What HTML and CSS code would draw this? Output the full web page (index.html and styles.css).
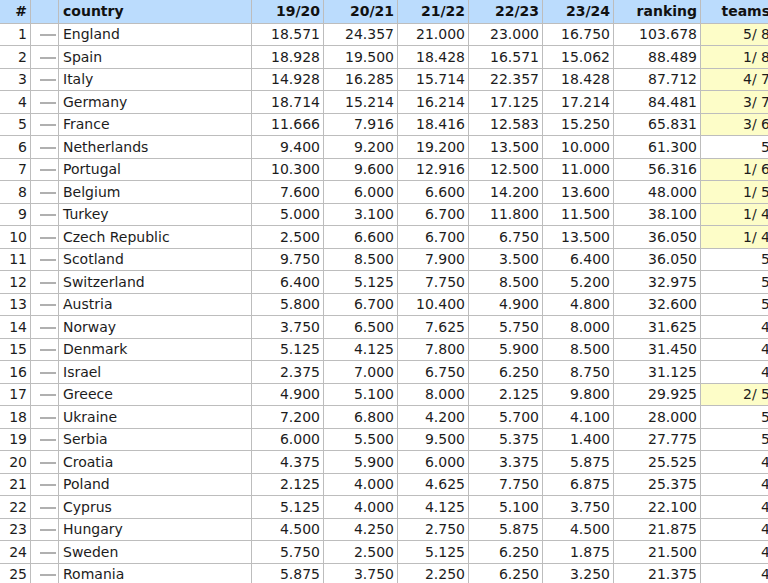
FILE: index.html
```html
<!DOCTYPE html>
<html>
<head>
<meta charset="utf-8">
<link rel="stylesheet" href="styles.css">
</head>
<body>
<table class="rank">
<colgroup>
<col class="c-pos"><col class="c-mv"><col class="c-country"><col class="c-a"><col class="c-b"><col class="c-c"><col class="c-d"><col class="c-e"><col class="c-rank"><col class="c-teams">
</colgroup>
<thead>
<tr><th class="num">#</th><th></th><th class="txt">country</th><th class="num">19/20</th><th class="num">20/21</th><th class="num">21/22</th><th class="num">22/23</th><th class="num">23/24</th><th class="num">ranking</th><th class="num">teams</th></tr>
</thead>
<tbody>
<tr><td class="num">1</td><td class="mv"><span class="dash"></span></td><td>England</td><td class="num">18.571</td><td class="num">24.357</td><td class="num">21.000</td><td class="num">23.000</td><td class="num">16.750</td><td class="num">103.678</td><td class="num hl">5/ 8</td></tr>
<tr><td class="num">2</td><td class="mv"><span class="dash"></span></td><td>Spain</td><td class="num">18.928</td><td class="num">19.500</td><td class="num">18.428</td><td class="num">16.571</td><td class="num">15.062</td><td class="num">88.489</td><td class="num hl">1/ 8</td></tr>
<tr><td class="num">3</td><td class="mv"><span class="dash"></span></td><td>Italy</td><td class="num">14.928</td><td class="num">16.285</td><td class="num">15.714</td><td class="num">22.357</td><td class="num">18.428</td><td class="num">87.712</td><td class="num hl">4/ 7</td></tr>
<tr><td class="num">4</td><td class="mv"><span class="dash"></span></td><td>Germany</td><td class="num">18.714</td><td class="num">15.214</td><td class="num">16.214</td><td class="num">17.125</td><td class="num">17.214</td><td class="num">84.481</td><td class="num hl">3/ 7</td></tr>
<tr><td class="num">5</td><td class="mv"><span class="dash"></span></td><td>France</td><td class="num">11.666</td><td class="num">7.916</td><td class="num">18.416</td><td class="num">12.583</td><td class="num">15.250</td><td class="num">65.831</td><td class="num hl">3/ 6</td></tr>
<tr><td class="num">6</td><td class="mv"><span class="dash"></span></td><td>Netherlands</td><td class="num">9.400</td><td class="num">9.200</td><td class="num">19.200</td><td class="num">13.500</td><td class="num">10.000</td><td class="num">61.300</td><td class="num">5</td></tr>
<tr><td class="num">7</td><td class="mv"><span class="dash"></span></td><td>Portugal</td><td class="num">10.300</td><td class="num">9.600</td><td class="num">12.916</td><td class="num">12.500</td><td class="num">11.000</td><td class="num">56.316</td><td class="num hl">1/ 6</td></tr>
<tr><td class="num">8</td><td class="mv"><span class="dash"></span></td><td>Belgium</td><td class="num">7.600</td><td class="num">6.000</td><td class="num">6.600</td><td class="num">14.200</td><td class="num">13.600</td><td class="num">48.000</td><td class="num hl">1/ 5</td></tr>
<tr><td class="num">9</td><td class="mv"><span class="dash"></span></td><td>Turkey</td><td class="num">5.000</td><td class="num">3.100</td><td class="num">6.700</td><td class="num">11.800</td><td class="num">11.500</td><td class="num">38.100</td><td class="num hl">1/ 4</td></tr>
<tr><td class="num">10</td><td class="mv"><span class="dash"></span></td><td>Czech Republic</td><td class="num">2.500</td><td class="num">6.600</td><td class="num">6.700</td><td class="num">6.750</td><td class="num">13.500</td><td class="num">36.050</td><td class="num hl">1/ 4</td></tr>
<tr><td class="num">11</td><td class="mv"><span class="dash"></span></td><td>Scotland</td><td class="num">9.750</td><td class="num">8.500</td><td class="num">7.900</td><td class="num">3.500</td><td class="num">6.400</td><td class="num">36.050</td><td class="num">5</td></tr>
<tr><td class="num">12</td><td class="mv"><span class="dash"></span></td><td>Switzerland</td><td class="num">6.400</td><td class="num">5.125</td><td class="num">7.750</td><td class="num">8.500</td><td class="num">5.200</td><td class="num">32.975</td><td class="num">5</td></tr>
<tr><td class="num">13</td><td class="mv"><span class="dash"></span></td><td>Austria</td><td class="num">5.800</td><td class="num">6.700</td><td class="num">10.400</td><td class="num">4.900</td><td class="num">4.800</td><td class="num">32.600</td><td class="num">5</td></tr>
<tr><td class="num">14</td><td class="mv"><span class="dash"></span></td><td>Norway</td><td class="num">3.750</td><td class="num">6.500</td><td class="num">7.625</td><td class="num">5.750</td><td class="num">8.000</td><td class="num">31.625</td><td class="num">4</td></tr>
<tr><td class="num">15</td><td class="mv"><span class="dash"></span></td><td>Denmark</td><td class="num">5.125</td><td class="num">4.125</td><td class="num">7.800</td><td class="num">5.900</td><td class="num">8.500</td><td class="num">31.450</td><td class="num">4</td></tr>
<tr><td class="num">16</td><td class="mv"><span class="dash"></span></td><td>Israel</td><td class="num">2.375</td><td class="num">7.000</td><td class="num">6.750</td><td class="num">6.250</td><td class="num">8.750</td><td class="num">31.125</td><td class="num">4</td></tr>
<tr><td class="num">17</td><td class="mv"><span class="dash"></span></td><td>Greece</td><td class="num">4.900</td><td class="num">5.100</td><td class="num">8.000</td><td class="num">2.125</td><td class="num">9.800</td><td class="num">29.925</td><td class="num hl">2/ 5</td></tr>
<tr><td class="num">18</td><td class="mv"><span class="dash"></span></td><td>Ukraine</td><td class="num">7.200</td><td class="num">6.800</td><td class="num">4.200</td><td class="num">5.700</td><td class="num">4.100</td><td class="num">28.000</td><td class="num">5</td></tr>
<tr><td class="num">19</td><td class="mv"><span class="dash"></span></td><td>Serbia</td><td class="num">6.000</td><td class="num">5.500</td><td class="num">9.500</td><td class="num">5.375</td><td class="num">1.400</td><td class="num">27.775</td><td class="num">5</td></tr>
<tr><td class="num">20</td><td class="mv"><span class="dash"></span></td><td>Croatia</td><td class="num">4.375</td><td class="num">5.900</td><td class="num">6.000</td><td class="num">3.375</td><td class="num">5.875</td><td class="num">25.525</td><td class="num">4</td></tr>
<tr><td class="num">21</td><td class="mv"><span class="dash"></span></td><td>Poland</td><td class="num">2.125</td><td class="num">4.000</td><td class="num">4.625</td><td class="num">7.750</td><td class="num">6.875</td><td class="num">25.375</td><td class="num">4</td></tr>
<tr><td class="num">22</td><td class="mv"><span class="dash"></span></td><td>Cyprus</td><td class="num">5.125</td><td class="num">4.000</td><td class="num">4.125</td><td class="num">5.100</td><td class="num">3.750</td><td class="num">22.100</td><td class="num">4</td></tr>
<tr><td class="num">23</td><td class="mv"><span class="dash"></span></td><td>Hungary</td><td class="num">4.500</td><td class="num">4.250</td><td class="num">2.750</td><td class="num">5.875</td><td class="num">4.500</td><td class="num">21.875</td><td class="num">4</td></tr>
<tr><td class="num">24</td><td class="mv"><span class="dash"></span></td><td>Sweden</td><td class="num">5.750</td><td class="num">2.500</td><td class="num">5.125</td><td class="num">6.250</td><td class="num">1.875</td><td class="num">21.500</td><td class="num">4</td></tr>
<tr><td class="num">25</td><td class="mv"><span class="dash"></span></td><td>Romania</td><td class="num">5.875</td><td class="num">3.750</td><td class="num">2.250</td><td class="num">6.250</td><td class="num">3.250</td><td class="num">21.375</td><td class="num">4</td></tr>
</tbody>
</table>
</body>
</html>
```
FILE: styles.css
```css
html, body {
  margin: 0;
  padding: 0;
  overflow: hidden;
  background: #fff;
}
body {
  width: 768px;
  height: 583px;
}
.rank {
  border-collapse: collapse;
  table-layout: fixed;
  width: 774px;
  margin-left: -1px;
  font-family: "DejaVu Sans", Verdana, sans-serif;
  font-size: 14px;
  color: #1c1c1c;
}
.c-pos { width: 31px; }
.c-mv { width: 28px; }
.c-country { width: 193px; }
.c-a { width: 72px; }
.c-b { width: 74px; }
.c-c { width: 71px; }
.c-d { width: 74px; }
.c-e { width: 71px; }
.c-rank { width: 87px; }
.c-teams { width: 73px; }
.rank th, .rank td {
  border: 1px solid #bdbdbd;
  padding: 0 3px 0 4px;
  white-space: nowrap;
  overflow: hidden;
  line-height: 16px;
}
.rank thead tr {
  height: 23px;
}
.rank th {
  background: #bbdcfd;
  font-weight: bold;
  color: #111;
  border-top: none;
}
.rank tbody tr {
  height: 22.5px;
}
.rank .num {
  text-align: right;
}
.rank .txt {
  text-align: left;
}
.rank .hl {
  background: #fdfdc8;
}
.rank .mv {
  padding: 0;
  text-align: center;
}
.dash {
  display: inline-block;
  width: 16px;
  height: 2px;
  background: #b0b0b0;
  vertical-align: middle;
  margin-left: 6px;
}
```
